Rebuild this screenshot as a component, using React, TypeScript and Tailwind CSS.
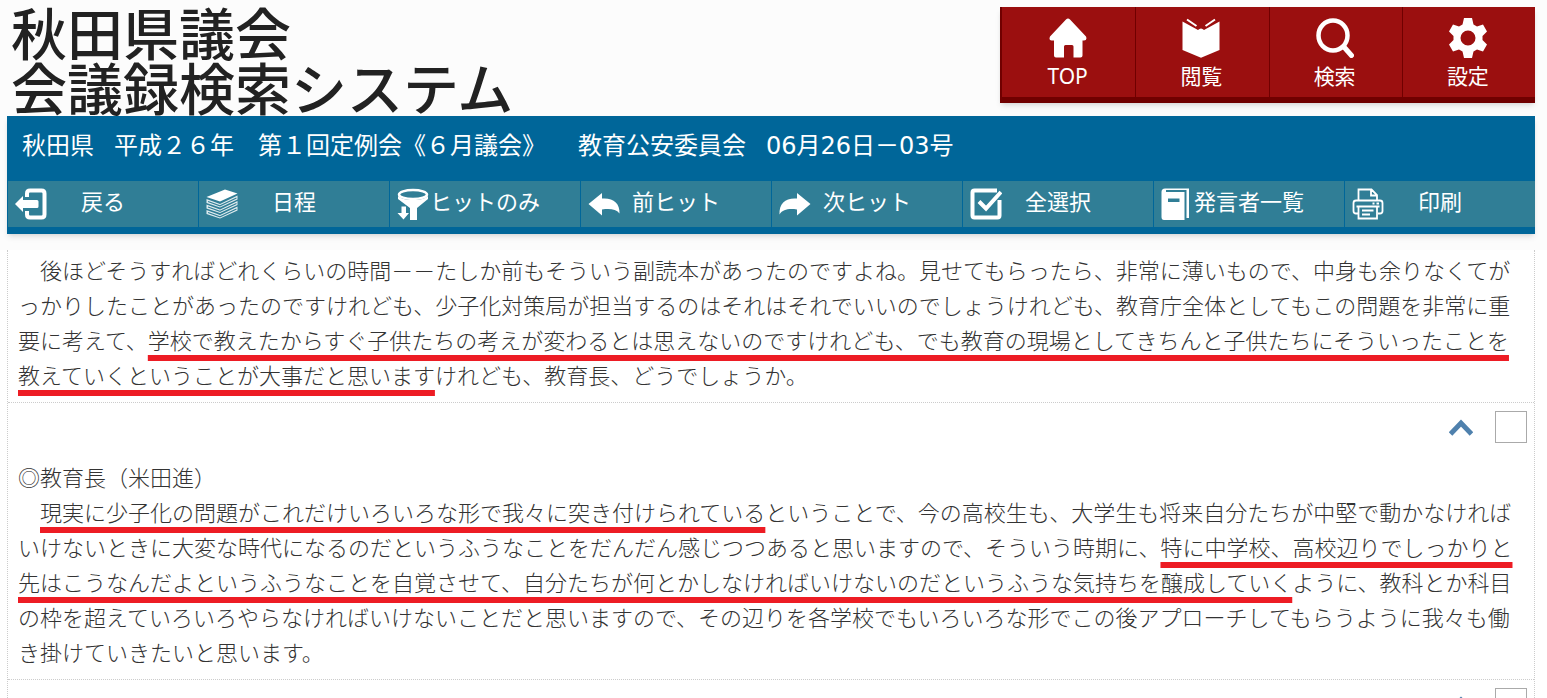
import type { ReactNode } from 'react'

const menuItems = [
  { label: 'TOP', icon: <HomeIcon /> },
  { label: '閲覧', icon: <BookIcon /> },
  { label: '検索', icon: <SearchIcon /> },
  { label: '設定', icon: <GearIcon /> },
]

const tools = [
  { label: '戻る', icon: <BackIcon /> },
  { label: '日程', icon: <StackIcon /> },
  { label: 'ヒットのみ', icon: <FunnelIcon /> },
  { label: '前ヒット', icon: <PrevIcon /> },
  { label: '次ヒット', icon: <NextIcon /> },
  { label: '全選択', icon: <SelectAllIcon /> },
  { label: '発言者一覧', icon: <NotebookIcon /> },
  { label: '印刷', icon: <PrinterIcon /> },
]

function HomeIcon() {
  return (
    <svg viewBox="0 0 38 40" className="h-10 w-[38px]" fill="currentColor">
      <path d="M19 0.500Q20 0.500 21 1.500L37 18.500Q38.500 22.500 35 22.500H33.500V37.500Q33.500 39.500 31.500 39.500H24.500V28.500Q24.500 27 23 27H16.500Q15 27 15 28.500V39.500H7Q5 39.500 5 37.500V22.500H2.500Q-0.500 22.500 1 18.500L17 1.500Q18 0.500 19 0.500Z" />
    </svg>
  )
}

function BookIcon() {
  return (
    <svg viewBox="0 0 38 40" className="h-10 w-[38px]" fill="currentColor">
      <path d="M0.500 3.500 16 12Q19 9 22 12L37.500 3.500V32L19 39.800 0.500 32Z" />
      <path d="M5 1.500 14.500 8M33 1.500 23.500 8" fill="none" stroke="currentColor" strokeWidth="2" />
    </svg>
  )
}

function SearchIcon() {
  return (
    <svg viewBox="0 0 38 40" className="h-10 w-[38px]" fill="none" stroke="currentColor" strokeLinecap="round">
      <ellipse cx="17" cy="17.500" rx="14.500" ry="15" strokeWidth="4.500" />
      <path d="M28 29 35.500 37.500" strokeWidth="5" />
    </svg>
  )
}

function GearIcon() {
  return (
    <svg viewBox="0 0 40 40" className="h-10 w-10" fill="currentColor" fillRule="evenodd">
      <path d="M16 0h8l1.500 6.500 3.500 2L35 6.500l4 7-4.500 4.500v4L39 26.500l-4 7-6-2-3.500 2L24 40h-8l-1.500-6.500-3.500-2-6 2-4-7L5.500 22v-4L1 13.500l4-7 6 2 3.500-2ZM20 12.500a7.500 7.500 0 1 0 0 15 7.500 7.500 0 0 0 0-15Z" />
    </svg>
  )
}

function BackIcon() {
  return (
    <svg viewBox="0 0 32 32" className="size-8" fill="currentColor">
      <path d="M12 9V5.500Q12 2.500 15 2.500H26.500Q29.500 2.500 29.500 5.500V26.500Q29.500 29.500 26.500 29.500H15Q12 29.500 12 26.500V23" fill="none" stroke="currentColor" strokeWidth="4" />
      <path d="M0 16 8 8V12H22Q23.500 12 23.500 13.500V18.500Q23.500 20 22 20H8V24Z" />
    </svg>
  )
}

function StackIcon() {
  return (
    <svg viewBox="0 0 32 32" className="size-8" fill="currentColor">
      <path d="M19 1.500 31.500 5.500 14 13.500 0.500 9Z" />
      <path d="M0.500 11 14 16 31.500 7.500V11.500L14 19.500 0.500 15ZM0.500 16.500 14 21.500 31.500 13V17L14 25 0.500 20.500ZM0.500 22 14 27 31.500 18.500V22.500L14 30.500 0.500 26Z" fillOpacity="0.85" />
      <path d="M2 13.500 14 17.800 30.500 10M2 19 14 23.300 30.500 15.500M2 24.500 14 28.800 30.500 21" fill="none" stroke="#307e96" strokeWidth="1.200" />
    </svg>
  )
}

function FunnelIcon() {
  return (
    <svg viewBox="0 0 32 32" className="size-8" fill="currentColor">
      <ellipse cx="16" cy="6.500" rx="14" ry="4.500" fill="none" stroke="currentColor" strokeWidth="2.500" />
      <path d="M1 8Q5 12 16 12T31 8V11L20 20V32H13V20L1 11Z" />
      <path d="M4.500 18.500H9V25H12L6.500 31.500 0.500 25H4.500Z" />
    </svg>
  )
}

function PrevIcon() {
  return (
    <svg viewBox="0 0 32 32" className="size-8" fill="currentColor">
      <path d="M0.500 16 14 5V10.500C25 9.500 32 15 31.500 25.500 28 21 22 20.500 14 21.500V27.500Z" />
    </svg>
  )
}

function NextIcon() {
  return (
    <svg viewBox="0 0 32 32" className="size-8" fill="currentColor">
      <path d="M31.500 16 18 5V10.500C7 9.500 0 15 0.500 26.500 4 21 10 20.500 18 21.500V27.500Z" />
    </svg>
  )
}

function SelectAllIcon() {
  return (
    <svg viewBox="0 0 32 32" className="size-8" fill="none" stroke="currentColor">
      <path d="M27 2.500H4.500Q2.500 2.500 2.500 4.500V27.500Q2.500 29.500 4.500 29.500H27.500Q29.500 29.500 29.500 27.500V12" strokeWidth="4" />
      <path d="M9 13.500 16 20.500 31 4" strokeWidth="4" />
    </svg>
  )
}

function NotebookIcon() {
  return (
    <svg viewBox="0 0 32 32" className="size-8" fill="currentColor" fillRule="evenodd">
      <path d="M4 0.500H28V2H5V4H23.500V32H3Q0.500 32 0.500 29V4Q0.500 0.500 4 0.500ZM7 10.500V14H18.500V10.500Z" />
      <path d="M25.500 2H28V30H25.500Z" />
    </svg>
  )
}

function PrinterIcon() {
  return (
    <svg viewBox="0 0 32 32" className="size-8" fill="none" stroke="currentColor" strokeWidth="1.800">
      <path d="M6.500 12V1.500H19.500L25 7V12M19 2V7.500H25" />
      <path d="M6 25.500H4Q1.500 25.500 1.500 23V15Q1.500 12.500 4 12.500H28Q30.500 12.500 30.500 15V23Q30.500 25.500 28 25.500H26" />
      <path d="M4.500 18.500H27.500M6.500 19V30.500H25V19M10 22.500H21.500M10 26.500H18" />
      <path d="M20.500 15.500H22.500M24.500 15.500H27" />
    </svg>
  )
}

function Hit({ children }: { children: ReactNode }) {
  return (
    <mark className="bg-transparent text-inherit underline decoration-[#ed1c24] decoration-[6px] underline-offset-[6px] [text-decoration-skip-ink:none]">
      {children}
    </mark>
  )
}

function RowControls({ label }: { label: string }) {
  return (
    <div className="flex items-start justify-end gap-[22px] pt-2 pr-[7px] pb-4">
      <a href="#top" aria-label="上へ" className="mt-2 text-[#4f81ad]">
        <svg viewBox="0 0 24 17" className="h-[17px] w-6" fill="none" stroke="currentColor" strokeWidth="5">
          <path d="M1.500 15 12 4 22.500 15" />
        </svg>
      </a>
      <input type="checkbox" aria-label={label} className="size-8 appearance-none border border-[#aaa] bg-white" />
    </div>
  )
}

export default function App() {
  return (
    <div
      id="top"
      lang="ja"
      className="h-screen overflow-hidden bg-white font-['DejaVu_Sans','Noto_Sans_CJK_JP',sans-serif]"
    >
      <div className="bg-[#fcfcfc] px-[7px] pt-[7px] pb-4">
        <header className="mr-[5px] flex items-start justify-between">
          <h1 className="h-[109px] pt-px pl-1 text-[56px] leading-[55px] font-medium text-[#222]">
            秋田県議会
            <br />
            会議録検索システム
          </h1>
          <nav className="grid w-[535px] grid-cols-4 border-b-[6px] border-l-2 border-b-[#700000] border-l-[#700000] bg-[#9b0f0f] font-['Noto_Sans','Noto_Sans_CJK_JP',sans-serif] text-white shadow-md">
            {menuItems.map((item, i) => (
              <a
                key={item.label}
                href="#menu"
                className={`flex h-[90px] flex-col items-center pt-[11px] pr-0.5 text-[21px] leading-9 ${i > 0 ? 'border-l border-[#700000]' : ''}`}
              >
                {item.icon}
                {item.label}
              </a>
            ))}
          </nav>
        </header>

        <div className="mr-[5px] bg-[#006699] pb-[7px] text-white shadow-md">
          <h2 className="flex h-[65px] pt-3 pl-[15px] text-2xl leading-9">
            <span>秋田県</span>
            <span className="ml-5">平成２６年　第１回定例会《６月議会》</span>
            <span className="ml-8">教育公安委員会</span>
            <span className="ml-5">06月26日－03号</span>
          </h2>
          <div className="grid grid-cols-8">
            {tools.map(tool => (
              <button
                key={tool.label}
                type="button"
                className="grid h-[46px] items-center border-l border-[#006699] bg-[#307e96] pl-[7px] text-[22px] leading-8"
              >
                <span className="col-start-1 row-start-1 justify-self-start">{tool.icon}</span>
                <span className="col-start-1 row-start-1 mr-[7px] justify-self-center pb-0.5">{tool.label}</span>
              </button>
            ))}
          </div>
        </div>
      </div>

      <main className="mr-3 ml-[7px] border-x border-dotted border-[#ccc] font-['Noto_Sans_CJK_JP',sans-serif] text-[22px] leading-[35px] font-light text-[#333]">
        <section className="border-b border-dotted border-[#ccc] px-[10px] pt-0.5 pb-[10px]">
          <p className="indent-[22px]">
            後ほどそうすればどれくらいの時間－－たしか前もそういう副読本があったのですよね。見せてもらったら、非常に薄いもので、中身も余りなくてがっかりしたことがあったのですけれども、少子化対策局が担当するのはそれはそれでいいのでしょうけれども、教育庁全体としてもこの問題を非常に重要に考えて、<Hit>学校で教えたからすぐ子供たちの考えが変わるとは思えないのですけれども、でも教育の現場としてきちんと子供たちにそういったことを教えていくということが大事だと思います</Hit>けれども、教育長、どうでしょうか。
          </p>
        </section>

        <section className="border-b border-dotted border-[#ccc] pb-[10px]">
          <RowControls label="教育長の発言を選択" />
          <div className="px-[10px]">
            <p>◎教育長（米田進）</p>
            <p className="indent-[22px]">
              <Hit>現実に少子化の問題がこれだけいろいろな形で我々に突き付けられている</Hit>ということで、今の高校生も、大学生も将来自分たちが中堅で動かなければいけないときに大変な時代になるのだというふうなことをだんだん感じつつあると思いますので、そういう時期に、<Hit>特に中学校、高校辺りでしっかりと先はこうなんだよというふうなことを自覚させて、自分たちが何とかしなければいけないのだというふうな気持ちを醸成していく</Hit>ように、教科とか科目の枠を超えていろいろやらなければいけないことだと思いますので、その辺りを各学校でもいろいろな形でこの後アプローチしてもらうように我々も働き掛けていきたいと思います。
            </p>
          </div>
        </section>

        <section>
          <RowControls label="次の発言を選択" />
        </section>
      </main>
    </div>
  )
}
